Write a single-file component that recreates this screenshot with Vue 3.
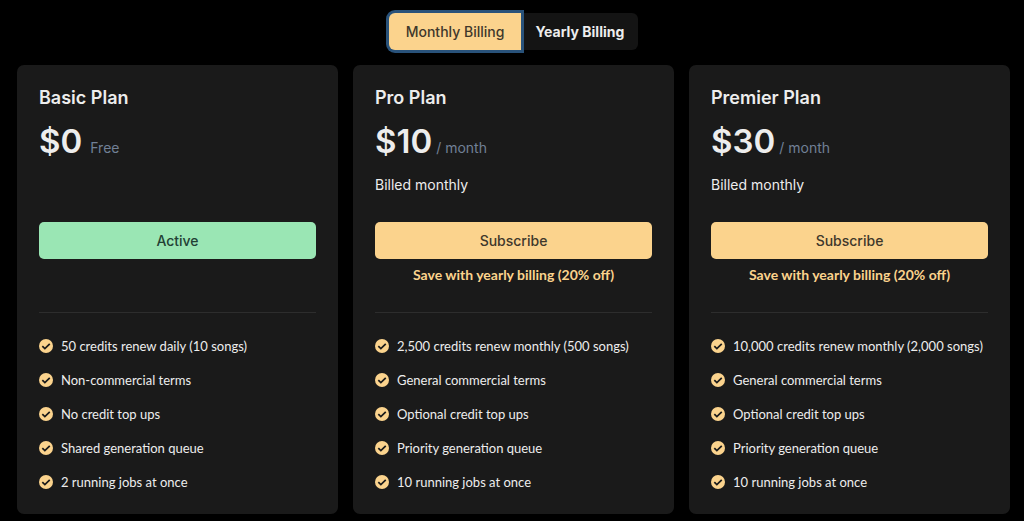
<template>
  <main class="pricing">
    <div class="billing-toggle" role="group" aria-label="Billing period">
      <button class="toggle-btn" :class="{ active: billing === 'monthly' }" :aria-pressed="billing === 'monthly'"
        @click="billing = 'monthly'">Monthly Billing</button>
      <button class="toggle-btn" :class="{ active: billing === 'yearly' }" :aria-pressed="billing === 'yearly'"
        @click="billing = 'yearly'">Yearly Billing</button>
    </div>

    <div class="plans">
      <section v-for="plan in plans" :key="plan.name" class="plan">
        <h2 class="plan-name">{{ plan.name }}</h2>
        <div class="price" :class="{ free: !plan.price }">
          <span class="amount">${{ priceOf(plan) }}</span>
          <span class="period">{{ plan.price ? '/ month' : 'Free' }}</span>
        </div>
        <p class="billed">{{ plan.price ? `Billed ${billing}` : '' }}</p>
        <button class="plan-btn" :class="{ current: !plan.price }">{{ plan.price ? 'Subscribe' : 'Active' }}</button>
        <p class="save">{{ plan.price ? 'Save with yearly billing (20% off)' : '' }}</p>
        <ul class="features">
          <li v-for="feature in plan.features" :key="feature">
            <svg class="check" viewBox="0 0 16 16" aria-hidden="true">
              <circle cx="8" cy="8" r="8" fill="#fbd38d" />
              <path d="M3.8 8.1l2.9 2.8 5.6-5.3" fill="none" stroke="#1a1a1a" stroke-width="2" />
            </svg>
            <span>{{ feature }}</span>
          </li>
        </ul>
      </section>
    </div>
  </main>
</template>

<script setup>
import { ref } from 'vue'

const billing = ref('monthly')

const plans = [
  {
    name: 'Basic Plan',
    price: 0,
    features: [
      '50 credits renew daily (10 songs)',
      'Non-commercial terms',
      'No credit top ups',
      'Shared generation queue',
      '2 running jobs at once'
    ]
  },
  {
    name: 'Pro Plan',
    price: 10,
    features: [
      '2,500 credits renew monthly (500 songs)',
      'General commercial terms',
      'Optional credit top ups',
      'Priority generation queue',
      '10 running jobs at once'
    ]
  },
  {
    name: 'Premier Plan',
    price: 30,
    features: [
      '10,000 credits renew monthly (2,000 songs)',
      'General commercial terms',
      'Optional credit top ups',
      'Priority generation queue',
      '10 running jobs at once'
    ]
  }
]

// yearly billing takes 20% off
const priceOf = (plan) => billing.value === 'yearly' ? plan.price * 0.8 : plan.price
</script>

<style>
body {
  margin: 0;
  background: #000;
}
</style>

<style scoped>
.pricing {
  box-sizing: border-box;
  padding: 13px 14px 7px 17px;
  color: #ededed;
  font-family: Inter, "Liberation Sans", sans-serif;
}

.billing-toggle {
  display: flex;
  justify-content: center;
  margin-bottom: 15px;
}

.toggle-btn {
  height: 37px;
  padding: 0 14px;
  border: none;
  border-radius: 0 6px 6px 0;
  background: #141414;
  color: #ededed;
  font-family: inherit;
  font-size: 14px;
  font-weight: 700;
  cursor: pointer;
}

.toggle-btn:first-child {
  padding: 0 17px;
  border-radius: 6px 0 0 6px;
}

.toggle-btn.active {
  position: relative;
  z-index: 1;
  background: #fbd38d;
  color: #3f382b;
  font-weight: 500;
  box-shadow: 0 0 0 3px #29527a;
}

.plans {
  display: grid;
  grid-template-columns: repeat(3, minmax(0, 1fr));
  gap: 15px;
}

.plan {
  display: flex;
  flex-direction: column;
  padding: 22px;
  border-radius: 7px;
  background: #1a1a1a;
}

.plan-name {
  margin: 0 0 10px;
  font-size: 18px;
  font-weight: 600;
  line-height: 22px;
}

.price {
  display: flex;
  align-items: baseline;
  gap: 4px;
  margin-bottom: 12px;
  line-height: 44px;
}

.price.free {
  gap: 8px;
}

.amount {
  font-size: 33px;
  font-weight: 600;
}

.period {
  color: #718096;
  font-size: 14px;
  line-height: 20px;
}

.billed {
  min-height: 20px;
  margin: 0 0 27px;
  font-size: 14px;
  line-height: 20px;
}

.plan-btn {
  height: 37px;
  border: none;
  border-radius: 5px;
  background: #fbd38d;
  color: #3f382b;
  font-family: inherit;
  font-size: 14px;
  font-weight: 500;
  cursor: pointer;
}

.plan-btn.current {
  background: #9ae6b4;
  color: #234034;
}

.save {
  min-height: 20px;
  margin: 6px 0 27px;
  color: #fbd38d;
  font-family: Lato, sans-serif;
  font-size: 14px;
  font-weight: 700;
  line-height: 20px;
  text-align: center;
}

.features {
  display: flex;
  flex-direction: column;
  gap: 14px;
  margin: 0;
  padding: 23px 0 0;
  border-top: 1px solid #2d2d2d;
  list-style: none;
  font-family: Lato, sans-serif;
  font-size: 13px;
  line-height: 20px;
}

.features li {
  display: flex;
  align-items: center;
  gap: 8px;
  white-space: nowrap;
}

.check {
  flex: none;
  width: 14px;
  height: 14px;
}

@media (max-width: 900px) {
  .plans {
    grid-template-columns: 1fr;
  }
}
</style>
